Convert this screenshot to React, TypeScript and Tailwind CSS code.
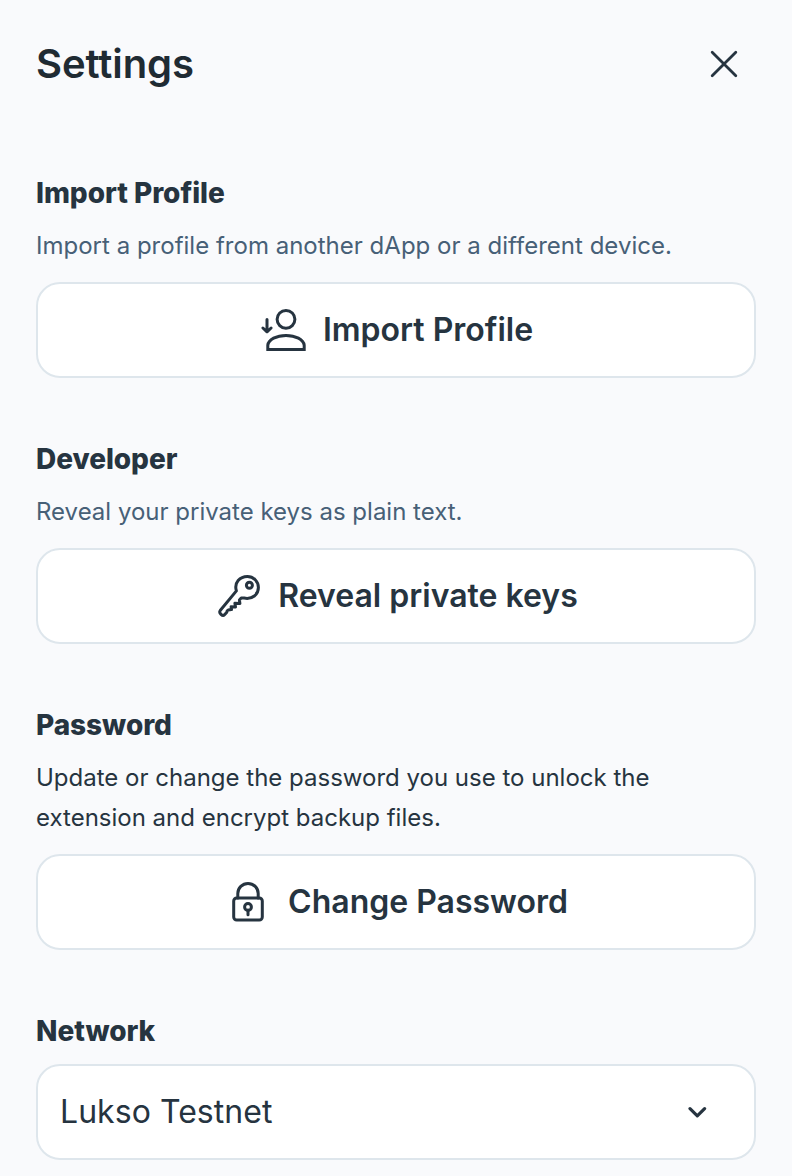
import React from "react";

const icon = {
  width: 48,
  height: 48,
  viewBox: "0 0 48 48",
  fill: "none",
  stroke: "currentColor",
  strokeWidth: 3,
  className: "shrink-0",
} as const;

function ImportProfileIcon() {
  return (
    <svg {...icon}>
      <circle cx="27" cy="13.3" r="8.9" />
      <path d="M8.8 43.4v-4.2C9.5 33.4 17.5 29.4 27 29.4s17.5 4 18.2 9.8v4.2Z" />
      <path d="M8 13.5v12M3.9 22 8 25.8 12.1 22" strokeLinecap="round" strokeLinejoin="round" />
    </svg>
  );
}

function KeyIcon() {
  return (
    <svg {...icon} strokeLinecap="round" strokeLinejoin="round">
      <path d="M22.4 18.9C19.8 10.6 26 4.5 33.4 4.5a11 11 0 0 1 11 11c0 7-6 12.1-14.2 10.6l-3-.2-1.8 2 .5 3.5-5-.2.6 3.7-4.4-.2.4 2.9-3.4.5c-1.1.4-1.3 1-1.3 2.1l-2.3 2.5c-1.9 2-6-1.7-4.3-4.2Z" />
      <circle cx="35.4" cy="13.3" r="3" />
    </svg>
  );
}

function LockIcon() {
  return (
    <svg {...icon} strokeLinecap="round" strokeLinejoin="round">
      <rect x="9.7" y="20" width="28.6" height="22" rx="3" />
      <path d="M13.8 20v-4.4a10.2 10.2 0 0 1 20.4 0V20M24 32v4.7" />
      <circle cx="24" cy="29" r="3.4" />
    </svg>
  );
}

function Action({ label, children }: { label: string; children: React.ReactNode }) {
  return (
    <button className="flex h-24 w-full items-center justify-center gap-4 rounded-3xl border-2 border-[#dee6ec] bg-white text-[32px] leading-10 font-semibold text-[#263440]">
      {children}
      <span>{label}</span>
    </button>
  );
}

function Heading({ children }: { children: React.ReactNode }) {
  return <h2 className="mb-[15px] text-[28px] leading-9 font-extrabold tracking-[-0.05px] text-[#263440]">{children}</h2>;
}

export default function App() {
  return (
    <main className="h-[1176px] w-[792px] overflow-hidden bg-[#f9fafc] px-9 pt-10 font-['Inter',sans-serif] text-[#263440]">
      <header className="flex h-12 items-center justify-between pr-[18px]">
        <h1 className="text-[40px] leading-[48px] font-semibold tracking-[-0.1px] text-[#1f2b33]">Settings</h1>
        <button aria-label="Close">
          <svg width="28" height="28" viewBox="0 0 28 28" fill="none" stroke="currentColor" strokeWidth="2.8" strokeLinecap="round">
            <path d="M2.2 2.2 25.8 25.8M25.8 2.2 2.2 25.8" />
          </svg>
        </button>
      </header>
      <div className="mt-[87px] flex flex-col gap-[63px]">
        <section>
          <Heading>Import Profile</Heading>
          <p className="mb-4 text-2xl leading-10 tracking-[0.01px] text-[#476077]">Import a profile from another dApp or a different device.</p>
          <Action label="Import Profile"><ImportProfileIcon /></Action>
        </section>
        <section>
          <Heading>Developer</Heading>
          <p className="mb-4 text-2xl leading-10 text-[#476077]">Reveal your private keys as plain text.</p>
          <Action label="Reveal private keys"><KeyIcon /></Action>
        </section>
        <section>
          <Heading>Password</Heading>
          <p className="mb-4 text-2xl leading-10">Update or change the password you use to unlock the extension and encrypt backup files.</p>
          <Action label="Change Password"><LockIcon /></Action>
        </section>
        <section>
          <Heading>Network</Heading>
          <button className="flex h-24 w-full items-center justify-between rounded-3xl border-2 border-[#dee6ec] bg-white pr-[46px] pl-[22px] text-[32px] leading-10">
            <span className="tracking-[0.05px]">Lukso Testnet</span>
            <svg width="20" height="14" viewBox="0 0 20 14" fill="none" stroke="currentColor" strokeWidth="3.2" strokeLinecap="round" strokeLinejoin="round">
              <path d="m2 3.6 7.3 7.2 7.3-7.2" />
            </svg>
          </button>
        </section>
      </div>
    </main>
  );
}
